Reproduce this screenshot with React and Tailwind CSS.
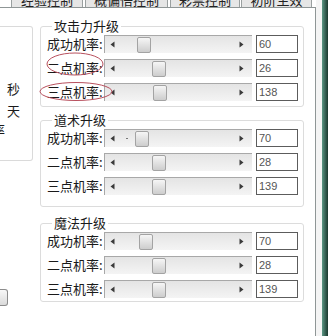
import React from "react";

const F = { fontFamily: '"Noto Sans CJK SC", "Noto Sans", sans-serif' };

function Arrow({ dir }) {
  return (
    <svg width="5" height="7" viewBox="0 0 5 7" className="shrink-0">
      {dir === "l" ? (
        <polygon points="4.5,0.5 4.5,6.5 0.5,3.5" fill="#3a3a3a" />
      ) : (
        <polygon points="0.5,0.5 0.5,6.5 4.5,3.5" fill="#3a3a3a" />
      )}
    </svg>
  );
}

function Row({ label, value, thumb, tick }) {
  return (
    <div className="flex items-center h-[18px]">
      <div className="w-[57px] text-[13px] leading-[18px] text-[#1a1a1a] whitespace-nowrap" style={F}>
        {label}:
      </div>
      <div className="w-[148px] h-[18px] flex items-center border-t border-l border-[#a8a8a8] bg-gradient-to-b from-[#e4e4e4] to-[#f4f4f4] pl-[5px] pr-[8px]">
        <Arrow dir="l" />
        {tick ? <div className="ml-[11px] w-[2px] h-[1px] bg-[#777]" /> : null}
        <div
          className={`${thumb} w-[14px] h-[16px] rounded-[2px] border border-[#a3a3a3] bg-gradient-to-b from-[#f6f6f6] to-[#cdcdcd]`}
        />
        <div className="ml-auto">
          <Arrow dir="r" />
        </div>
      </div>
      <div
        className="ml-[4px] w-[42px] h-[18px] border border-[#5c5c5c] bg-white pl-[2px] text-[11px] leading-[16px] text-[#555]"
        style={{ fontFamily: '"Liberation Sans", Arial, sans-serif' }}
      >
        {value}
      </div>
    </div>
  );
}

function Group({ title, rows, className, pb }) {
  return (
    <fieldset className={`${className} w-[264px] border border-[#dcdcdc] rounded-[3px] pl-[6px] ${pb}`}>
      <legend className="ml-[5px] px-[2px] text-[13px] leading-[14px] text-[#1a1a1a]" style={F}>
        {title}
      </legend>
      <div className="flex flex-col gap-[6px] pt-[2px]">
        {rows.map((r, i) => (
          <Row key={i} {...r} />
        ))}
      </div>
    </fieldset>
  );
}

function Tab({ text, w, ml }) {
  return (
    <div
      className={`${w} ${ml} h-[7px] overflow-hidden border-l border-r border-[#9aa0a0] bg-[#e6e6e6] flex justify-center`}
    >
      <span className="-mt-[7px] text-[13px] leading-[13px] text-[#222] whitespace-nowrap" style={F}>
        {text}
      </span>
    </div>
  );
}

export default function App() {
  return (
    <div className="relative w-[328px] h-[336px] overflow-hidden bg-white flex">
      <div className="w-[316px] flex flex-col">
        <div className="h-[7px] flex">
          <Tab text="经验控制" w="w-[72px]" ml="ml-[11px]" />
          <Tab text="概偏倍控制" w="w-[83px]" ml="ml-[2px]" />
          <Tab text="彩票控制" w="w-[70px]" ml="ml-[2px]" />
          <Tab text="初阶生效" w="w-[71px]" ml="ml-[1px]" />
        </div>
        <div className="flex-1 border-t border-r border-[#8f9696] bg-white flex">
          <div className="w-[40px] flex flex-col">
            <div className="mt-[18px] w-[33px] h-[135px] border-t border-r border-b border-[#dadada] rounded-r-[3px] overflow-hidden flex flex-col items-end pr-[12px] pt-[53px] text-[13px] leading-[22px] text-[#1a1a1a]" style={F}>
              <div className="-mt-[2px]">秒</div>
              <div>天</div>
              <div className="mr-[15px] -mt-[3px]">率</div>
            </div>
            <div className="mt-[128px] w-[8px] h-[17px] border-t border-r border-b border-[#8c8c8c] rounded-r-[3px] bg-gradient-to-b from-[#f8f8f8] to-[#dadada]" />
          </div>
          <div className="flex flex-col">
            <Group
              title="攻击力升级"
              className="mt-[11px]"
              pb="pb-[5px]"
              rows={[
                { label: "成功机率", value: "60", thumb: "ml-[22px]" },
                { label: "二点机率", value: "26", thumb: "ml-[37px]" },
                { label: "三点机率", value: "138", thumb: "ml-[38px]" },
              ]}
            />
            <Group
              title="道术升级"
              className="mt-[6px]"
              pb="pb-[11px]"
              rows={[
                { label: "成功机率", value: "70", thumb: "ml-[7px]", tick: true },
                { label: "二点机率", value: "28", thumb: "ml-[37px]" },
                { label: "三点机率", value: "139", thumb: "ml-[37px]" },
              ]}
            />
            <Group
              title="魔法升级"
              className="mt-[9px]"
              pb="pb-[3px]"
              rows={[
                { label: "成功机率", value: "70", thumb: "ml-[24px]" },
                { label: "二点机率", value: "28", thumb: "ml-[37px]" },
                { label: "三点机率", value: "139", thumb: "ml-[37px]" },
              ]}
            />
          </div>
        </div>
      </div>
      <div className="w-[6px] bg-[#f4f4f4]" />
      <div className="w-[6px] bg-gradient-to-r from-[#5d9986] to-[#1b392f]" />
      <svg className="absolute left-0 top-0 pointer-events-none" width="328" height="336">
        <ellipse cx="75" cy="64" rx="28" ry="11" fill="none" stroke="#b8505e" strokeWidth="1" />
        <ellipse cx="76" cy="91.5" rx="36" ry="9" fill="none" stroke="#b8505e" strokeWidth="1" />
      </svg>
    </div>
  );
}
